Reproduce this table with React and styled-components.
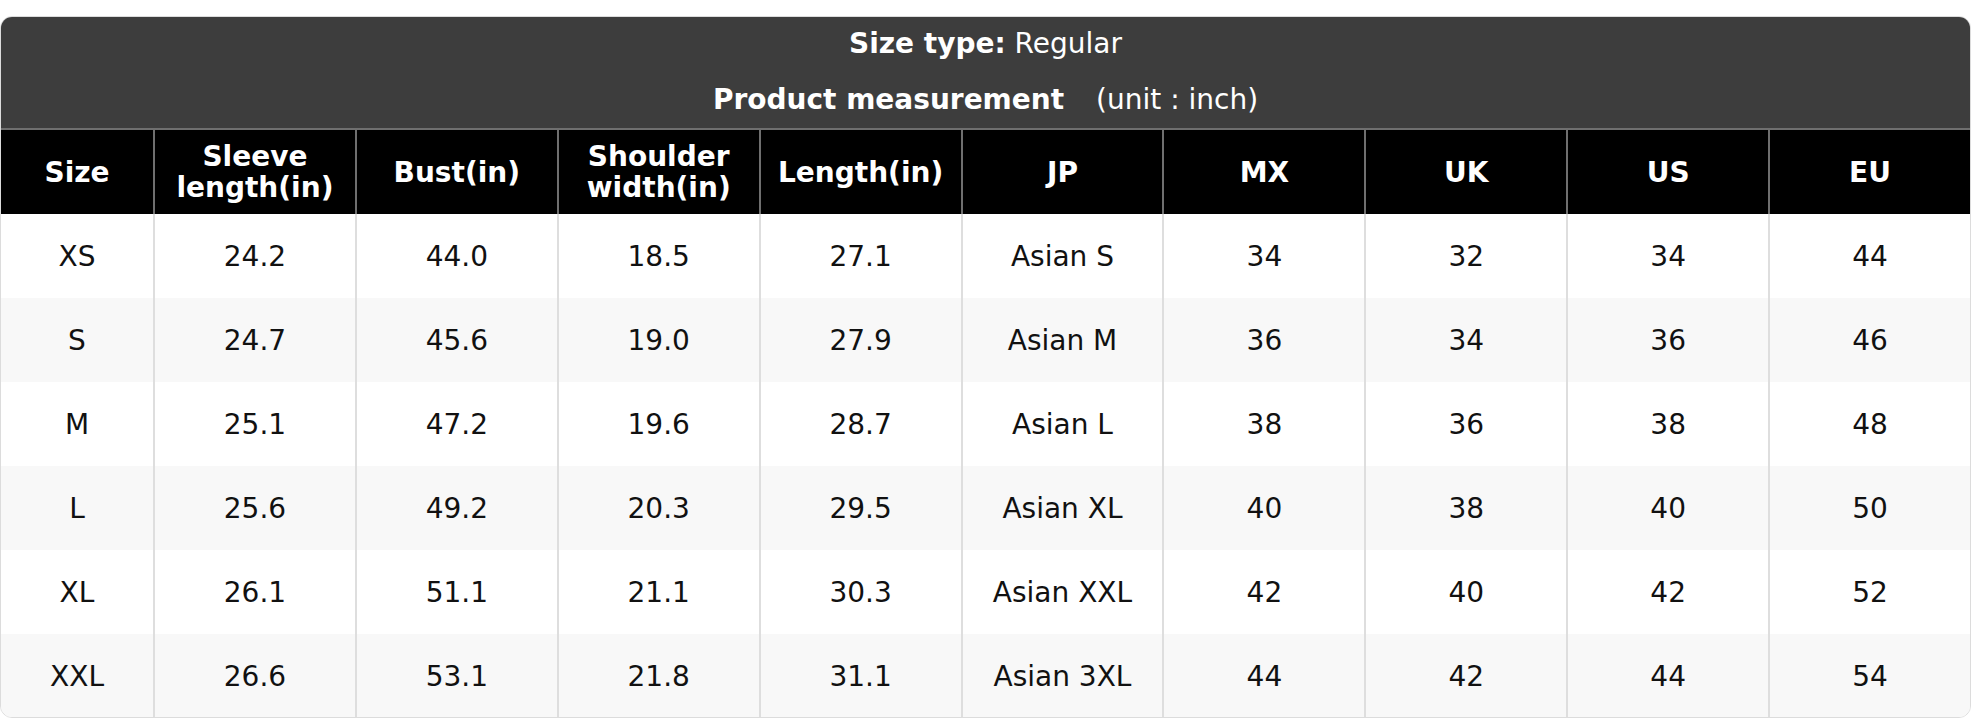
import React from 'react';
import styled, { createGlobalStyle } from 'styled-components';

const columns = ['Size', 'Sleeve\nlength(in)', 'Bust(in)', 'Shoulder\nwidth(in)', 'Length(in)', 'JP', 'MX', 'UK', 'US', 'EU'];

const rows = [
  ['XS', '24.2', '44.0', '18.5', '27.1', 'Asian S', '34', '32', '34', '44'],
  ['S', '24.7', '45.6', '19.0', '27.9', 'Asian M', '36', '34', '36', '46'],
  ['M', '25.1', '47.2', '19.6', '28.7', 'Asian L', '38', '36', '38', '48'],
  ['L', '25.6', '49.2', '20.3', '29.5', 'Asian XL', '40', '38', '40', '50'],
  ['XL', '26.1', '51.1', '21.1', '30.3', 'Asian XXL', '42', '40', '42', '52'],
  ['XXL', '26.6', '53.1', '21.8', '31.1', 'Asian 3XL', '44', '42', '44', '54'],
];

export default function App() {
  return (
    <>
      <GlobalStyle />
      <Card>
        <TitleBar>
          <TitleLine>
            <b>Size type:</b> Regular
          </TitleLine>
          <TitleLine>
            <b>Product measurement</b>
            <Unit>(unit : inch)</Unit>
          </TitleLine>
        </TitleBar>
        <Table>
          {columns.map((col, i) => (
            <HeadCell key={col} $first={i === 0}>{col}</HeadCell>
          ))}
          {rows.map((row, r) =>
            row.map((val, i) => (
              <Cell key={r + '-' + i} $first={i === 0} $shade={r % 2 === 1}>
                {val}
              </Cell>
            ))
          )}
        </Table>
      </Card>
    </>
  );
}

const GlobalStyle = createGlobalStyle`
  body {
    margin: 0;
    background: #ffffff;
    font-family: "DejaVu Sans", "Liberation Sans", sans-serif;
  }
`;

const Card = styled.div`
  margin-top: 16px;
  width: 1971px;
  height: 702px;
  box-sizing: border-box;
  border: 1px solid #dcdcdc;
  border-radius: 12px;
  overflow: hidden;
  background: #ffffff;
`;

const TitleBar = styled.div`
  background: #3d3d3d;
  color: #ffffff;
  height: 111px;
  box-sizing: border-box;
  padding-top: 11px;
  display: flex;
  flex-direction: column;
  align-items: center;
  gap: 24px;
`;

const TitleLine = styled.div`
  font-size: 28px;
  line-height: 32px;
  white-space: pre;
`;

const Unit = styled.span`
  margin-left: 32px;
`;

const Table = styled.div`
  display: grid;
  grid-template-columns: 152px repeat(9, 1fr);
  border-top: 2px solid #6f6f6f;
`;

const HeadCell = styled.div`
  background: #000000;
  color: #ffffff;
  font-weight: bold;
  font-size: 28px;
  line-height: 31px;
  height: 84px;
  display: flex;
  align-items: center;
  justify-content: center;
  text-align: center;
  white-space: pre-line;
  border-left: ${p => (p.$first ? 'none' : '2px solid #6f6f6f')};
`;

const Cell = styled.div`
  background: ${p => (p.$shade ? '#f8f8f8' : '#ffffff')};
  color: #111111;
  font-size: 28px;
  height: 84px;
  display: flex;
  align-items: center;
  justify-content: center;
  border-left: ${p => (p.$first ? 'none' : '2px solid #dedede')};
`;
